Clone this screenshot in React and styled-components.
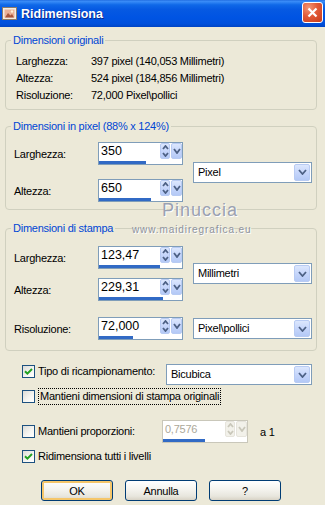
import styled, { createGlobalStyle } from "styled-components";

const GlobalStyle = createGlobalStyle`
  html, body {
    margin: 0;
    padding: 0;
    background: #ece9d8;
  }
  body {
    font-family: "Liberation Sans", Arial, sans-serif;
    font-size: 11px;
    letter-spacing: -0.25px;
    color: #000;
  }
  * {
    box-sizing: border-box;
  }
`;

const Window = styled.div`
  position: relative;
  width: 325px;
  height: 505px;
  overflow: hidden;
  background: #ece9d8;
`;

const TitleBar = styled.div`
  height: 27px;
  display: flex;
  align-items: center;
  padding: 0 2px 0 2px;
  background: linear-gradient(
    to bottom,
    #1a66dc 0%,
    #3d8ef8 4%,
    #2a80f2 10%,
    #0f68e8 18%,
    #0659e2 35%,
    #0054e3 65%,
    #0050dc 88%,
    #0044c4 100%
  );
`;

const Title = styled.span`
  margin-left: 4px;
  color: #fff;
  font-weight: bold;
  font-size: 12.5px;
  letter-spacing: 0;
  text-shadow: 1px 1px 0 #0b2a8a;
`;

const CloseButton = styled.div`
  margin-left: auto;
  align-self: flex-start;
  margin-top: 2px;
  width: 21px;
  height: 21px;
  border: 1px solid #fff;
  border-radius: 3px;
  background: radial-gradient(circle at 30% 25%, #f39676 0%, #e25a37 45%, #c63b1b 100%);
  display: flex;
  align-items: center;
  justify-content: center;
`;

const Body = styled.div`
  padding: 0 8px 0 5px;
  display: flex;
  flex-direction: column;
`;

const Group = styled.fieldset`
  margin: ${(p) => p.$top}px 0 0;
  padding: 0;
  border: 1px solid #d0d0bf;
  border-radius: 4px;
  min-width: 0;
`;

const Legend = styled.legend`
  margin-left: 5px;
  padding: 0 2px;
  color: #0046d5;
  line-height: 13px;
`;

const InfoGrid = styled.div`
  display: grid;
  grid-template-columns: 75px auto;
  padding: 6px 0 5px 10px;
  line-height: 17px;
`;

const FieldArea = styled.div`
  display: flex;
  flex-direction: column;
  gap: ${(p) => p.$gap || 0}px;
  padding: ${(p) => p.$pad};
`;

const Section = styled.div`
  display: flex;
  align-items: center;
  gap: 10px;
`;

const Pairs = styled.div`
  display: flex;
  flex-direction: column;
  gap: ${(p) => p.$gap || 0}px;
`;

const Pair = styled.div`
  display: flex;
  align-items: center;
`;

const FieldLabel = styled.span`
  width: 84px;
`;

const SpinBox = styled.div`
  width: ${(p) => (p.$disabled ? 86 : 85)}px;
  height: 23px;
  border: 1px solid ${(p) => (p.$disabled ? "#c9c7ba" : "#7f9db9")};
  background: #fff;
  display: flex;
  flex-direction: column;
`;

const SpinTop = styled.div`
  height: 16px;
  display: flex;
  align-items: stretch;
  gap: 1px;
`;

const SpinText = styled.span`
  flex: 1;
  padding-left: 2px;
  line-height: 16px;
  font-size: ${(p) => (p.$disabled ? 11 : 12.5)}px;
  letter-spacing: ${(p) => (p.$disabled ? "-0.25px" : "0")};
  color: ${(p) => (p.$disabled ? "#aca899" : "#000")};
`;

const ArrowButton = styled.span`
  width: ${(p) => p.$w}px;
  display: flex;
  flex-direction: column;
  align-items: center;
  justify-content: center;
  gap: 2px;
  border: 1px solid ${(p) => (p.$disabled ? "#e6e4dc" : "#b8cbf3")};
  border-radius: 2px;
  background: ${(p) =>
    p.$disabled
      ? "#f2f1ea"
      : "linear-gradient(to bottom, #dce7fd 0%, #c6d6fb 50%, #b4c9f6 100%)"};
`;

const Bar = styled.div`
  height: 3px;
  margin-top: 2px;
  background: #316ac5;
`;

const Select = styled.div`
  width: ${(p) => p.$w}px;
  height: 21px;
  border: 1px solid #7f9db9;
  background: #fff;
  display: flex;
  align-items: stretch;
  padding: 1px;
`;

const SelectText = styled.span`
  flex: 1;
  padding-left: 3px;
  line-height: 17px;
`;

const Options = styled.div`
  display: flex;
  flex-direction: column;
  padding-left: 17px;
`;

const OptionRow = styled.div`
  display: flex;
  align-items: ${(p) => p.$align || "center"};
  height: ${(p) => p.$h}px;
  margin-top: ${(p) => p.$top}px;
`;

const CheckBox = styled.span`
  flex: none;
  width: 13px;
  height: 13px;
  margin-top: ${(p) => p.$mt || 0}px;
  border: 1px solid #1c5180;
  background: linear-gradient(135deg, #dcdcd7 0%, #f6f6f3 60%, #ffffff 100%);
  display: flex;
  align-items: center;
  justify-content: center;
`;

const OptionLabel = styled.span`
  margin-left: 3px;
  width: ${(p) => (p.$w ? `${p.$w}px` : "auto")};
  line-height: 15px;
  border: ${(p) => (p.$focus ? "1px dotted #000" : "none")};
  padding: ${(p) => (p.$focus ? "0 1px" : "0")};
`;

const Suffix = styled.span`
  margin-left: 12px;
`;

const ButtonRow = styled.div`
  display: flex;
  gap: 12px;
  margin-top: 16px;
  padding-left: 36px;
`;

const Button = styled.div`
  width: 72px;
  height: 21px;
  border: 1px solid #003c74;
  border-radius: 3px;
  background: linear-gradient(to bottom, #ffffff 0%, #f4f3ee 45%, #e8e6dd 80%, #d8d3c6 100%);
  box-shadow: ${(p) => (p.$default ? "inset 0 0 0 2px #f5c66a" : "none")};
  display: flex;
  align-items: center;
  justify-content: center;
`;

const Watermark = styled.div`
  position: absolute;
  left: ${(p) => p.$x}px;
  top: ${(p) => p.$y}px;
  font-size: ${(p) => p.$size}px;
  letter-spacing: ${(p) => p.$ls}px;
  color: ${(p) => p.$color};
  text-shadow: 1px 1px 0 #ffffff;
  white-space: nowrap;
`;

const Chevron = ({ up, color = "#4d6185", w = 7, h = 4 }) => (
  <svg width={w + 2} height={h + 2} viewBox={`0 0 ${w + 2} ${h + 2}`}>
    <path
      d={
        up
          ? `M1 ${h + 1} L${(w + 2) / 2} 1 L${w + 1} ${h + 1}`
          : `M1 1 L${(w + 2) / 2} ${h + 1} L${w + 1} 1`
      }
      fill="none"
      stroke={color}
      strokeWidth="1.8"
    />
  </svg>
);

const Spin = ({ value, bar, disabled }) => {
  const c = disabled ? "#c9c7ba" : "#4d6185";
  return (
    <SpinBox $disabled={disabled}>
      <SpinTop>
        <SpinText $disabled={disabled}>{value}</SpinText>
        <ArrowButton $w={10} $disabled={disabled}>
          <Chevron up color={c} w={5} h={3} />
          <Chevron color={c} w={5} h={3} />
        </ArrowButton>
        <ArrowButton $w={11} $disabled={disabled}>
          <Chevron color={c} w={6} h={4} />
        </ArrowButton>
      </SpinTop>
      <Bar style={{ width: bar }} />
    </SpinBox>
  );
};

const Dropdown = ({ text, w = 119 }) => (
  <Select $w={w}>
    <SelectText>{text}</SelectText>
    <ArrowButton $w={16}>
      <Chevron w={7} h={4} />
    </ArrowButton>
  </Select>
);

const Check = ({ checked, mt }) => (
  <CheckBox $mt={mt}>
    {checked && (
      <svg width="9" height="9" viewBox="0 0 9 9">
        <path d="M1 4.2 L3.4 6.6 L8 2" fill="none" stroke="#21a121" strokeWidth="2" />
      </svg>
    )}
  </CheckBox>
);

const AppIcon = () => (
  <svg width="15" height="13" viewBox="0 0 15 13">
    <rect x="0.5" y="0.5" width="14" height="12" fill="#f4ede2" stroke="#8d7b68" />
    <rect x="2.5" y="2.5" width="10" height="8" fill="#eab197" />
    <path d="M3 10.5 L6 6 L8.5 8.5 L10 7 L12 10.5 Z" fill="#a9553a" />
    <circle cx="10" cy="4.5" r="1.2" fill="#fff3d8" />
  </svg>
);

const App = () => (
  <Window>
    <GlobalStyle />
    <TitleBar>
      <AppIcon />
      <Title>Ridimensiona</Title>
      <CloseButton>
        <svg width="11" height="11" viewBox="0 0 11 11">
          <path d="M1.5 1.5 L9.5 9.5 M9.5 1.5 L1.5 9.5" stroke="#fff" strokeWidth="2.2" />
        </svg>
      </CloseButton>
    </TitleBar>

    <Body>
      <Group $top={7}>
        <Legend>Dimensioni originali</Legend>
        <InfoGrid>
          <span>Larghezza:</span>
          <span>397 pixel (140,053 Millimetri)</span>
          <span>Altezza:</span>
          <span>524 pixel (184,856 Millimetri)</span>
          <span>Risoluzione:</span>
          <span>72,000 Pixel\pollici</span>
        </InfoGrid>
      </Group>

      <Group $top={10}>
        <Legend>Dimensioni in pixel (88% x 124%)</Legend>
        <FieldArea $pad="9px 4px 7px 8px">
          <Section>
            <Pairs $gap={14}>
              <Pair>
                <FieldLabel>Larghezza:</FieldLabel>
                <Spin value="350" bar={47} />
              </Pair>
              <Pair>
                <FieldLabel>Altezza:</FieldLabel>
                <Spin value="650" bar={52} />
              </Pair>
            </Pairs>
            <Dropdown text="Pixel" />
          </Section>
        </FieldArea>
      </Group>

      <Group $top={12}>
        <Legend>Dimensioni di stampa</Legend>
        <FieldArea $pad="11px 4px 10px 8px" $gap={16}>
          <Section>
            <Pairs $gap={9}>
              <Pair>
                <FieldLabel>Larghezza:</FieldLabel>
                <Spin value="123,47" bar={61} />
              </Pair>
              <Pair>
                <FieldLabel>Altezza:</FieldLabel>
                <Spin value="229,31" bar={64} />
              </Pair>
            </Pairs>
            <Dropdown text="Millimetri" />
          </Section>
          <Section>
            <Pairs>
              <Pair>
                <FieldLabel>Risoluzione:</FieldLabel>
                <Spin value="72,000" bar={34} />
              </Pair>
            </Pairs>
            <Dropdown text="Pixel\pollici" />
          </Section>
        </FieldArea>
      </Group>

      <Options>
        <OptionRow $top={13} $h={21} $align="flex-start">
          <Check checked mt={1} />
          <OptionLabel $w={128}>Tipo di ricampionamento:</OptionLabel>
          <Dropdown text="Bicubica" w={146} />
        </OptionRow>
        <OptionRow $top={3} $h={17}>
          <Check />
          <OptionLabel $focus>Mantieni dimensioni di stampa originali</OptionLabel>
        </OptionRow>
        <OptionRow $top={15} $h={23}>
          <Check />
          <OptionLabel $w={124}>Mantieni proporzioni:</OptionLabel>
          <Spin value="0,7576" bar={42} disabled />
          <Suffix>a 1</Suffix>
        </OptionRow>
        <OptionRow $top={6} $h={15}>
          <Check checked />
          <OptionLabel>Ridimensiona tutti i livelli</OptionLabel>
        </OptionRow>
      </Options>

      <ButtonRow>
        <Button $default>OK</Button>
        <Button>Annulla</Button>
        <Button>?</Button>
      </ButtonRow>
    </Body>

    <Watermark $x={162} $y={200} $size={18} $ls={1} $color="#9aa1b1">
      Pinuccia
    </Watermark>
    <Watermark $x={132} $y={224} $size={10} $ls={0.9} $color="#8e939d">
      www.maidiregrafica.eu
    </Watermark>
  </Window>
);

export default App;
